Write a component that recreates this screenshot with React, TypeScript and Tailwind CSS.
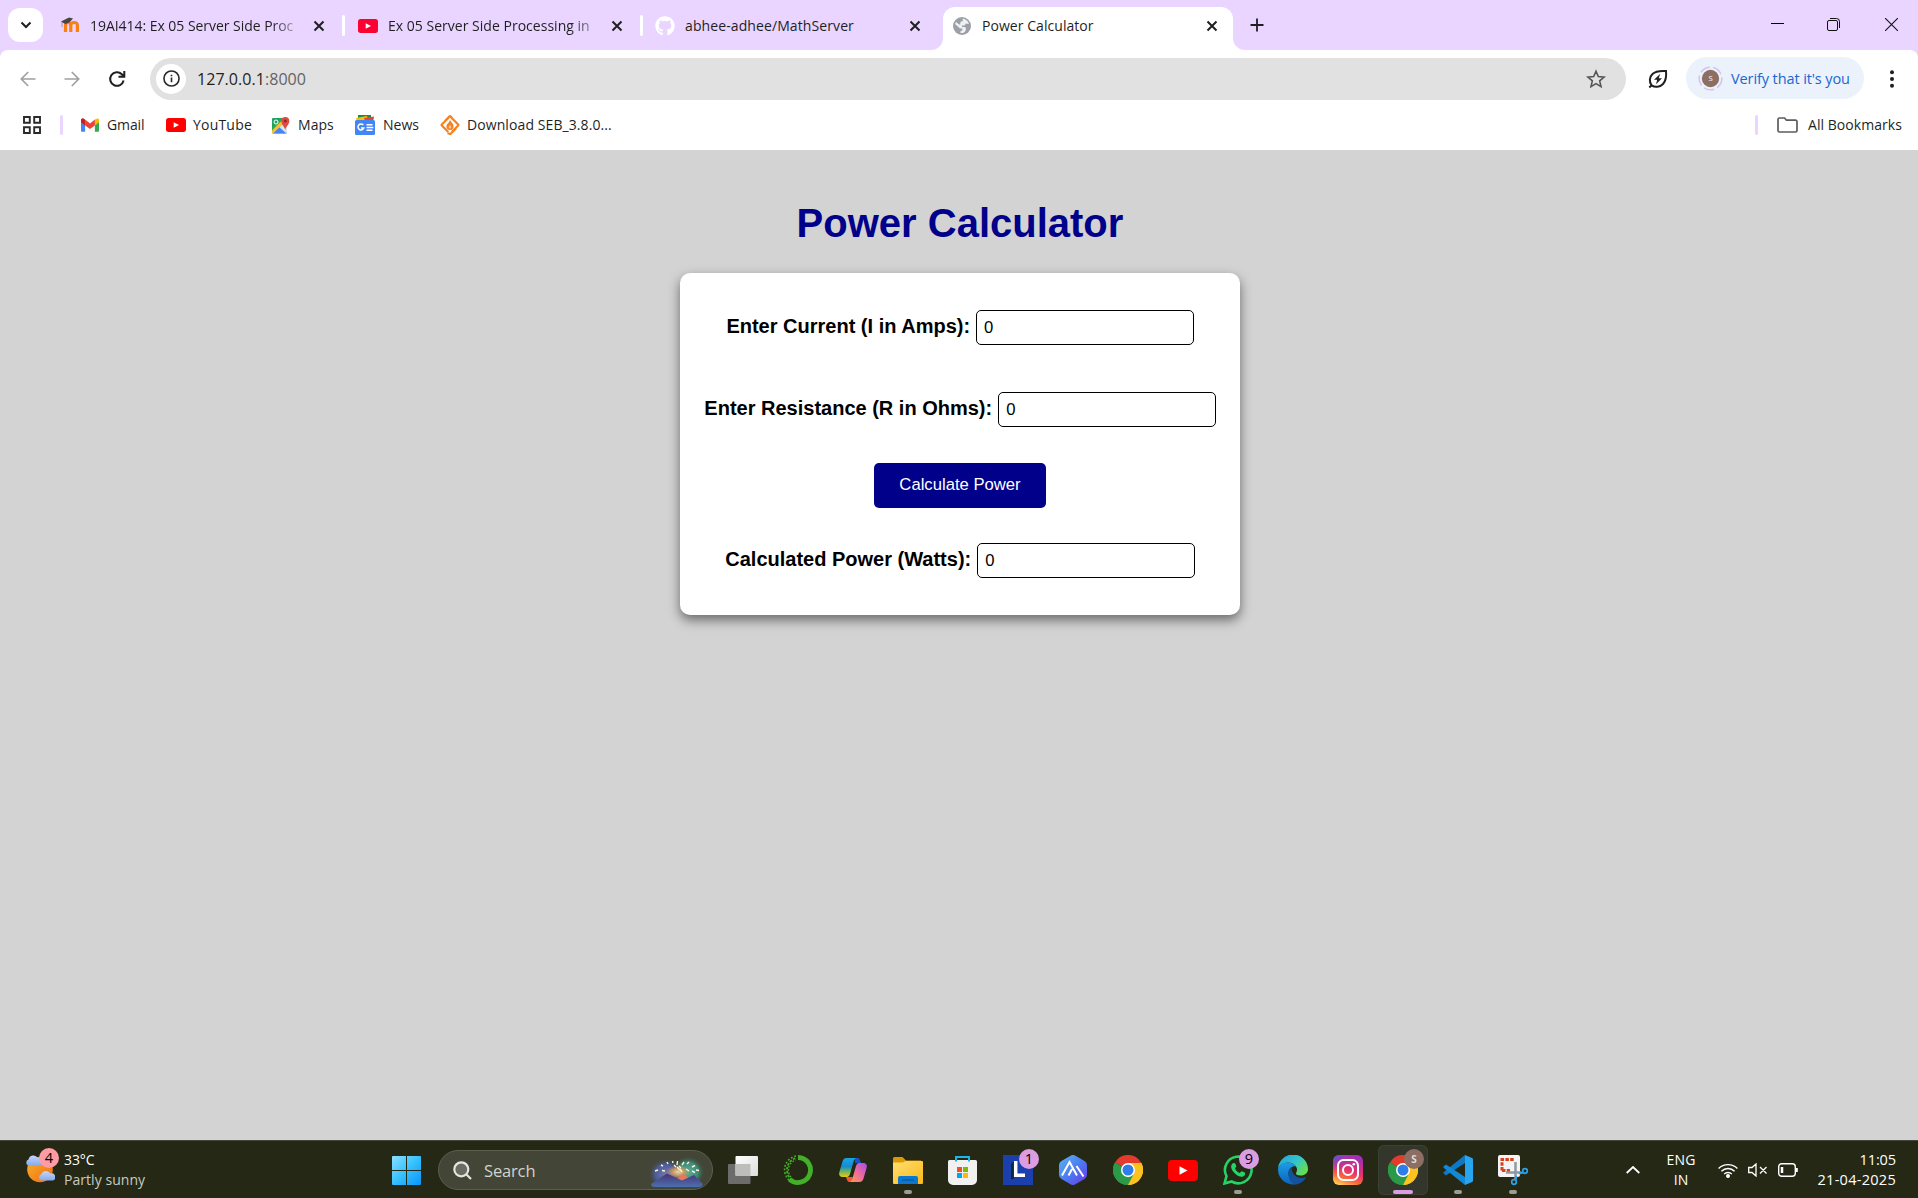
import React from "react";
import { FaGithub } from "react-icons/fa";

type Kids = { children?: React.ReactNode; className?: string };

const YouTube = ({ className = "", red = "#f00" }: { className?: string; red?: string }) => (
  <svg viewBox="0 0 30 21" className={className}>
    <rect width="30" height="21" rx="4" fill={red} />
    <path d="M11.5 6.2v8.6l8-4.3z" fill="#fff" />
  </svg>
);

const Cross = () => (
  <svg viewBox="0 0 12 12" className="h-3 w-3 shrink-0" stroke="#1f1f1f" strokeWidth="2">
    <path d="M1.5 1.5l9 9M10.5 1.5l-9 9" />
  </svg>
);

const Moodle = () => (
  <svg viewBox="0 0 20 17" className="h-[17px] w-5 shrink-0">
    <path d="M5.5 15V8.5c0-2 1-3 2.600-3s2.700 1 2.700 3V15M10.800 15V8.500c0-2 1.200-3 3.200-3s3.400 1 3.400 3V15" fill="none" stroke="#f98012" strokeWidth="3.2" />
    <path d="M1 4.500L9 .5l4 1-3.500 3.800-4 1.700-3-1.500z" fill="#4a4347" />
    <path d="M2 5v5" stroke="#8b7c83" strokeWidth=".7" />
  </svg>
);

const Globe = () => (
  <svg viewBox="0 0 18 18" className="h-[18px] w-[18px] shrink-0">
    <circle cx="9" cy="9" r="9" fill="#9aa0a6" />
    <path d="M9 1.800c3.500 0 6.200 2 7 5h-3.500c0 1-.7 1.700-1.700 1.700H9v1.600h2.500c.8 0 1.400.6 1.400 1.400 0 2.500-1.200 4.500-4.400 4.500l-1.200-.3v-1.500c1 0 2-.8 2-1.800v-1H7L2 7c.2-.8.6-1.500 1-2l3.300 2.600h1V6c0-1 .7-1.700 1.700-1.700h.8V2.500z" fill="#eef0f2" />
  </svg>
);

const ChromeLogo = ({ className = "" }: { className?: string }) => (
  <svg viewBox="0 0 30 30" className={className}>
    <path d="M15 15L2 7.500A15 15 0 0 1 28 7.500z" fill="#e33b2e" />
    <path d="M15 15L28 7.500A15 15 0 0 1 15 30z" fill="#fcc31e" />
    <path d="M15 15v15A15 15 0 0 1 2 7.500z" fill="#2a9a48" />
    <path d="M15 8H28.300a15 15 0 0 0-.3-.5H15z" fill="#e33b2e" />
    <path d="M15 8h13.300A15 15 0 0 1 15 30l6-11.500z" fill="#fcc31e" />
    <path d="M2 7.500l6.900 11L15 22l5.500-2.500L15 30A15 15 0 0 1 2 7.500z" fill="#2a9a48" />
    <circle cx="15" cy="15" r="7" fill="#fff" />
    <circle cx="15" cy="15" r="5.500" fill="#2f7de9" />
  </svg>
);

const Tab = ({ icon, children, className = "" }: Kids & { icon: React.ReactNode }) => (
  <div className="flex h-[50px] w-[298px] shrink-0 items-center pt-px">
    <div className="flex w-5 shrink-0 justify-center">{icon}</div>
    <div className={`ml-2.5 w-[214px] shrink-0 whitespace-nowrap text-[14px] ${className}`}>{children}</div>
    <div className="ml-[9px] flex w-3 shrink-0">
      <Cross />
    </div>
    <div className="ml-[17px] h-[21px] w-[3px] rounded-full bg-white" />
  </div>
);

const TabStrip = () => (
  <div className="flex h-[50px] bg-[#e9d5ff]">
    <div className="ml-2 mt-2 flex h-[34px] w-[35px] shrink-0 items-center justify-center rounded-xl bg-white">
      <svg viewBox="0 0 12 8" className="h-2 w-3" fill="none" stroke="#1f1f1f" strokeWidth="2">
        <path d="M1.500 1.500L6 6l4.500-4.500" />
      </svg>
    </div>
    <div className="flex pl-[17px]">
      <Tab icon={<Moodle />} className="tracking-[-0.04px] [mask-image:linear-gradient(to_right,#000_182px,transparent_214px)]">19AI414: Ex 05 Server Side Proc</Tab>
      <Tab icon={<YouTube className="h-[14px] w-5" red="#ff0033" />} className="tracking-[0.02px] [mask-image:linear-gradient(to_right,#000_182px,transparent_220px)]">Ex 05 Server Side Processing in</Tab>
      <div className="flex h-[50px] w-[287px] shrink-0 items-center pt-px">
        <FaGithub className="ml-[-1px] h-5 w-5 shrink-0 text-white" />
        <div className="ml-2.5 w-[224px] whitespace-nowrap text-[14px] tracking-[0.1px]">abhee-adhee/MathServer</div>
        <Cross />
      </div>
    </div>
    <div className="relative mt-[7px] flex h-[43px] w-[290px] shrink-0 items-center rounded-t-xl bg-white pb-[6px]">
      <svg viewBox="0 0 314 12" className="absolute -left-3 bottom-0 h-3 w-[314px]" fill="#fff">
        <path d="M0 12a12 12 0 0 0 12-12v12zM314 12a12 12 0 0 1-12-12v12z" />
      </svg>
      <div className="ml-[10px] flex"><Globe /></div>
      <div className="ml-[11px] w-[224px] whitespace-nowrap text-[14px] tracking-[0.05px]">Power Calculator</div>
      <Cross />
    </div>
    <svg viewBox="0 0 14 14" className="ml-[17px] mt-[18px] h-[14px] w-[14px]" stroke="#1f1f1f" strokeWidth="1.800">
      <path d="M7 .5v13M.5 7h13" />
    </svg>
    <div className="mr-5 ml-auto flex h-[50px] items-start gap-[44px] pt-[18px]">
      <svg viewBox="0 0 13 13" className="h-[13px] w-[13px]" stroke="#000"><path d="M0 5.500h13" /></svg>
      <svg viewBox="0 0 13 13" className="-ml-px mr-px h-[13px] w-[13px]" stroke="#111" fill="none">
        <rect x=".5" y="2.500" width="10" height="10" rx="1.500" />
        <path d="M3 .5h6.500a3 3 0 0 1 3 3V10" />
      </svg>
      <svg viewBox="0 0 13 13" className="h-[13px] w-[13px]" stroke="#111" strokeWidth="1.100"><path d="M0 0l13 13M13 0L0 13" /></svg>
    </div>
  </div>
);

const Arrow = ({ className = "" }: Kids) => (
  <svg viewBox="0 0 16 16" className={`h-4 w-4 ${className}`} fill="none" stroke="#a0a0a0" strokeWidth="1.700">
    <path d="M15.500 8H1.500M8.200 1L1.300 8l6.900 7" />
  </svg>
);

const Toolbar = () => (
  <div className="bg-[#e9d5ff]">
    <div className="flex h-[57px] items-center rounded-t-lg bg-white">
      <Arrow className="ml-[20px]" />
      <Arrow className="ml-[28px] rotate-180" />
      <svg viewBox="0 0 18 18" className="ml-[28px] h-[18px] w-[18px]" fill="none" stroke="#1f1f1f" strokeWidth="2">
        <path d="M15.600 10.500A6.800 6.800 0 1 1 13.800 4.200L16 6.500M16.300 1v5.800h-5.800" />
      </svg>
      <div className="ml-[24px] flex h-[42px] w-[1476px] items-center rounded-full bg-[#e1e1e1]">
        <div className="ml-[6px] flex h-[30px] w-[30px] items-center justify-center rounded-full bg-white">
          <svg viewBox="0 0 18 18" className="h-[17px] w-[17px]" fill="none" stroke="#2a2a2a" strokeWidth="1.700">
            <circle cx="9" cy="9" r="8" />
            <path d="M9 8v5M9 5v1.700" />
          </svg>
        </div>
        <div className="ml-[11px] pt-px text-[16px] tracking-[0.05px] text-[#1f1f1f]">127.0.0.1<span className="text-[#636363]">:8000</span></div>
        <svg viewBox="0 0 20 20" className="ml-auto mr-5 h-5 w-5" fill="none" stroke="#555" strokeWidth="1.600">
          <path d="M10 2.200l2.300 5.400 5.800.5-4.400 3.800 1.300 5.700-5-3-5 3 1.300-5.700L1.900 8.100l5.800-.5z" />
        </svg>
      </div>
      <svg viewBox="0 0 20 20" className="ml-[22px] h-5 w-5" fill="none" stroke="#1f1f1f" strokeWidth="2">
        <path d="M3.600 16.300C1 13 1.300 8 4.500 5 7.500 2 12 1.600 18 2c.6 6-.2 10-3 13-3 3.200-8 3.600-11.400 1.300zM1.300 18.500l2.300-2.200" />
        <path d="M12.300 4.800L6 10.700h3.200L8 15.200l6-6h-3.300z" fill="#1f1f1f" stroke="none" />
      </svg>
      <div className="ml-[18px] mt-[-1px] flex h-[42px] w-[178px] items-center rounded-full bg-[#ebf2fb]">
        <svg viewBox="0 0 26 26" className="ml-3 h-[25px] w-[25px]">
          <circle cx="13" cy="13" r="11.800" fill="none" stroke="#d5c3ee" strokeWidth="1.600" strokeDasharray="11 3.500" />
          <circle cx="13" cy="13" r="9" fill="#8d6e63" />
          <text x="13" y="16" textAnchor="middle" fontSize="8" fill="#fff">S</text>
        </svg>
        <div className="ml-2 whitespace-nowrap pt-0.5 text-[14.500px] tracking-[-0.1px] text-[#1967d2]">Verify that it's you</div>
      </div>
      <svg viewBox="0 0 4 18" className="ml-[26px] h-[18px] w-1" fill="#1f1f1f">
        <circle cx="2" cy="2.200" r="2" /><circle cx="2" cy="9" r="2" /><circle cx="2" cy="15.800" r="2" />
      </svg>
    </div>
    <div className="flex h-[43px] items-center bg-white pb-[8px] text-[14px] text-[#1f1f1f] [&_span]:-mt-px">
      <svg viewBox="0 0 18 18" className="ml-[23px] h-[18px] w-[18px]" fill="none" stroke="#2a2a2a" strokeWidth="1.900">
        <path d="M1 1h5.800v5.800H1zM11.200 1H17v5.800h-5.800zM1 11.200h5.800V17H1zM11.200 11.200H17V17h-5.800z" />
      </svg>
      <div className="ml-[19px] h-5 w-[3px] rounded-full bg-[#e9d5ff]" />
      <div className="ml-[18px] flex w-[85px] items-center gap-2">
        <svg viewBox="0 0 20 15" className="h-[14px] w-[18px]">
          <path d="M0 2v12a1 1 0 0 0 1 1h3.600V6z" fill="#4285f4" />
          <path d="M20 2v12a1 1 0 0 1-1 1h-3.600V6z" fill="#34a853" />
          <path d="M15.400 1.500L18 .2a1.700 1.700 0 0 1 2 1.800v2.400l-4.600 3.600z" fill="#fbbc04" />
          <path d="M4.600 8V1.500L10 5.700l5.400-4.200V8L10 12z" fill="#ea4335" />
          <path d="M0 4.400V2A1.900 1.900 0 0 1 3 .4l1.600 1.200V8z" fill="#c5221f" />
        </svg>
        <span className="tracking-[-0.1px]">Gmail</span>
      </div>
      <div className="flex w-[105px] items-center gap-[7px]">
        <YouTube className="h-[14px] w-5" />
        <span className="tracking-[0.2px]">YouTube</span>
      </div>
      <div className="flex w-[84px] items-center gap-2">
        <svg viewBox="0 0 19 18" className="h-[18px] w-[19px]">
          <rect x="1" y="2" width="15" height="15.500" rx="1.500" fill="#34a853" />
          <path d="M1.500 17.500L16 4v12a1.500 1.500 0 0 1-1.500 1.500z" fill="#dce3e9" />
          <path d="M8 11l7.500 6.500H2z" fill="#4285f4" />
          <path d="M1 14.500L13 2.500l3 1.500L2 17.500a1 1 0 0 1-1-1z" fill="#fbc02d" />
          <path d="M1 12V3.500A1.500 1.500 0 0 1 2.500 2H11z" fill="#1ea362" />
          <circle cx="5" cy="6" r="2" fill="none" stroke="#fff" />
          <path d="M14.200 14c-.3-3.500-3.900-5-3.900-9a4 4 0 0 1 8 0c0 4-3.800 5.500-4.100 9z" fill="#e04a3f" />
          <circle cx="14.300" cy="5" r="1.400" fill="#812b2b" />
        </svg>
        <span className="tracking-[0.05px]">Maps</span>
      </div>
      <div className="flex w-[85px] items-center gap-2">
        <svg viewBox="0 0 20 20" className="h-5 w-5">
          <path d="M3 0h13v8H3z" fill="#1e8e3e" />
          <path d="M1 3l11-2 2 7H2z" fill="#fbbc04" />
          <path d="M9 3l10-1.500L18 8h-7z" fill="#ea4335" />
          <rect y="5" width="20" height="15" rx="1.500" fill="#4285f4" />
          <path d="M8.300 10A3 3 0 1 0 8.800 13H6M11.500 9.800h6M11.500 12.500h6.800M11.500 15.200h6" fill="none" stroke="#fff" strokeWidth="1.500" />
        </svg>
        <span>News</span>
      </div>
      <div className="flex items-center gap-[7px]">
        <svg viewBox="0 0 20 20" className="h-5 w-5" fill="none" stroke="#f58220" strokeWidth="2.200">
          <path d="M8.300 3L1.800 9.500a.7.700 0 0 0 0 1l6.500 6.500M7.500 18.300l1.800.4a1 1 0 0 0 1.400 0L16 13.500M11.700 17L18.200 10.500a.7.700 0 0 0 0-1L11.700 3M12.500 3.800L10.700 1.600a1 1 0 0 0-1.400 0L5 6" />
          <path d="M10 4.800c.6 2.200 3.600 3.700 3.600 6.500a3.600 3.600 0 0 1-7.200 0c0-2.100 2.800-3.300 3.600-6.500z" fill="#f58220" stroke="none" />
          <path d="M10 9.500c.3 1 1.300 1.500 1.300 2.700a1.300 1.300 0 0 1-2.600 0c0-1 1-1.500 1.300-2.700z" fill="#fbc795" stroke="none" />
        </svg>
        <span className="tracking-[0.09px]">Download SEB_3.8.0...</span>
      </div>
      <div className="ml-auto h-5 w-[3px] rounded-full bg-[#e9d5ff]" />
      <svg viewBox="0 0 21 16" className="ml-[19px] h-4 w-[21px]" fill="none" stroke="#5c5c5c" strokeWidth="1.700">
        <path d="M1 2.500A1.500 1.500 0 0 1 2.500 1h5l2 2.200h9A1.500 1.500 0 0 1 20 4.700v8.800a1.500 1.500 0 0 1-1.500 1.500h-16A1.500 1.500 0 0 1 1 13.500z" />
      </svg>
      <span className="ml-[10px] mr-4 w-[94px] whitespace-nowrap tracking-[0.05px]">All Bookmarks</span>
    </div>
  </div>
);

const Field = ({ label, className = "" }: { label: string; className?: string }) => (
  <div className={`flex h-[35px] justify-center ${className}`}>
    <label className="mr-[6px] mt-[5px] whitespace-nowrap text-[20px] font-bold leading-[23px]">{label}</label>
    <input defaultValue="0" className="h-[35px] w-[217.500px] rounded-[5px] border border-black bg-white px-[7px] text-[16.670px] outline-none" />
  </div>
);

const Calculator = () => (
  <main className="flex h-[990px] flex-col items-center bg-[#d3d3d3] pl-0.5 font-['Liberation_Sans',Arial,sans-serif] text-black">
    <h1 className="mt-[50px] text-[40px] font-bold leading-[46px] text-[#00008b]">Power Calculator</h1>
    <form className="mt-[27px] flex h-[342px] w-[560px] flex-col items-center rounded-[10px] bg-white pt-[37px] shadow-[0_5px_12px_rgba(0,0,0,0.5)]">
      <Field label="Enter Current (I in Amps):" />
      <Field label="Enter Resistance (R in Ohms):" className="mt-[47px]" />
      <button type="button" className="mt-[36px] h-[45px] w-[172px] rounded-[5px] bg-[#00008b] pb-[3px] text-[16.670px] text-white">Calculate Power</button>
      <Field label="Calculated Power (Watts):" className="mt-[35px]" />
    </form>
  </main>
);

const App = ({ children, dot = false, className = "" }: Kids & { dot?: boolean }) => (
  <div className={`relative flex h-[50px] w-[50px] shrink-0 items-center justify-center rounded-md ${className}`}>
    {children}
    {dot && <span className="absolute bottom-[1px] h-1 w-2 rounded-full bg-[#9b9c93]" />}
  </div>
);

const Badge = ({ children, className = "" }: Kids) => (
  <span className={`absolute flex h-5 w-5 items-center justify-center rounded-full text-[14.500px] leading-none text-black ${className}`}>{children}</span>
);

const icon = "h-[30px] w-[30px]";

const Taskbar = () => (
  <div className="flex h-[58px] items-center border-t border-[#43463a] bg-[#252815] pt-px text-[14px] text-white">
    <div className="relative ml-[25px] h-[30px] w-[39px]">
      <svg viewBox="0 0 30 30" className={icon}>
        <defs>
          <linearGradient id="sun" x1="0" y1="0" x2="1" y2="1"><stop stopColor="#f7b32b" /><stop offset="1" stopColor="#f06a14" /></linearGradient>
          <linearGradient id="cloud" x1="0" y1="0" x2="0" y2="1"><stop stopColor="#c4d8fb" /><stop offset="1" stopColor="#86a9ee" /></linearGradient>
        </defs>
        <circle cx="15" cy="14.500" r="12.800" fill="url(#sun)" />
        <path d="M3 10.500a3.300 3.300 0 0 1 .5-6A5 5 0 0 1 12.800 3a4 4 0 0 1 3.500 7.500z" fill="url(#cloud)" />
        <path d="M16 25.500a3.600 3.600 0 0 1 .3-6.500 5 5 0 0 1 9-.5 3.700 3.700 0 0 1 2.500 7z" fill="url(#cloud)" />
      </svg>
      <Badge className="-top-[7px] left-[14px] bg-[#ff9ba3]">4</Badge>
    </div>
    <div className="w-[328px] leading-5">
      <div className="tracking-[-0.1px]">33°C</div>
      <div className="tracking-[0.05px] text-[#c9cac2]">Partly sunny</div>
    </div>
    <svg viewBox="0 0 29 29" className="h-[29px] w-[29px]">
      <defs><linearGradient id="win" gradientUnits="userSpaceOnUse" x1="0" y1="0" x2="29" y2="29"><stop stopColor="#8be2ff" /><stop offset=".5" stopColor="#35c0ff" /><stop offset="1" stopColor="#0a94fb" /></linearGradient></defs>
      <path d="M0 1a1 1 0 0 1 1-1h13v14H0zM15 0h13a1 1 0 0 1 1 1v13H15zM0 15h14v14H1a1 1 0 0 1-1-1zM15 15h14v13a1 1 0 0 1-1 1H15z" fill="url(#win)" />
    </svg>
    <div className="ml-[17px] mr-[5px] flex h-10 w-[275px] items-center rounded-full border border-[#5c5f50] bg-[#434636]">
      <svg viewBox="0 0 19 19" className="ml-[14px] h-[19px] w-[19px]" fill="none" stroke="#e5e5e1" strokeWidth="2.200">
        <circle cx="8.300" cy="8.300" r="7" fill="#6a6c61" /><path d="M13.500 13.500l4.500 4.500" />
      </svg>
      <span className="ml-3 mt-0.5 text-[16.500px] tracking-[-0.15px] text-[#d2d3cc]">Search</span>
      <svg viewBox="0 0 54 32" className="ml-auto mr-[8px] mt-1 h-8 w-[54px]">
        <defs>
          <radialGradient id="glowL"><stop stopColor="#6d7ba8" /><stop offset=".6" stopColor="#4d5c9a" /><stop offset="1" stopColor="#434636" stopOpacity="0" /></radialGradient>
          <radialGradient id="glowR"><stop stopColor="#5cae94" /><stop offset=".6" stopColor="#3b8d7a" /><stop offset="1" stopColor="#434636" stopOpacity="0" /></radialGradient>
          <radialGradient id="warm"><stop stopColor="#f2d6a6" /><stop offset=".5" stopColor="#dfa05c" stopOpacity=".8" /><stop offset="1" stopColor="#d29058" stopOpacity="0" /></radialGradient>
          <linearGradient id="hill" x1="0" y1="0" x2="0" y2="1"><stop stopColor="#473476" /><stop offset="1" stopColor="#4c6fae" /></linearGradient>
        </defs>
        <ellipse cx="16" cy="18" rx="18" ry="16" fill="url(#glowL)" />
        <ellipse cx="38" cy="16" rx="17" ry="16" fill="url(#glowR)" />
        <ellipse cx="28" cy="16" rx="12" ry="7" fill="url(#warm)" />
        <path d="M27 23l6-5 6 4-6 5z" fill="#ee735c" />
        <path d="M8 14l-3 1M13 10l-2-1M18 8l-1-2M23 7l-.5-2M27 9l.5-4M32 9l2-3M37 8l2-2M42 11l3-1.500M46 14l3 .5M42 15l3 1.500M36 13l3 2M29 10l2 2M24 9l2 2M15 15l-3-.5M27 11l3 3M30 13l2 3" stroke="#fff3dd" strokeWidth="1.400" />
        <path d="M1 28L17 17.500l15 7L44 19l9 9q-1 3-4 3H5q-4 0-4-3z" fill="url(#hill)" />
      </svg>
    </div>
    <div className="flex gap-[5px]">
      <App>
        <svg viewBox="0 0 30 28" className="h-7 w-[30px]">
          <defs><linearGradient id="tv" x1="0" y1="0" x2="1" y2="1"><stop stopColor="#fff" /><stop offset="1" stopColor="#dcdcdc" /></linearGradient></defs>
          <rect x="0" y="8" width="22.500" height="20" rx="1" fill="#6c6c6a" />
          <rect x="7.500" y="0" width="22.500" height="20" rx="1" fill="url(#tv)" />
          <path d="M7.500 8h15v12h-14a1 1 0 0 1-1-1z" fill="#bdbdbb" />
        </svg>
      </App>
      <App>
        <svg viewBox="0 0 30 30" className={icon} fill="none" stroke="#43b02a">
          <path d="M15 2.500a12.500 12.500 0 1 1-8.500 21.700" strokeWidth="4.800" />
          <path d="M9 25A12.500 12.500 0 0 1 13 3" strokeWidth="1.800" strokeDasharray="2.500 1.500" />
          <path d="M6 25A14 14 0 0 1 13 1" strokeWidth="1.600" strokeDasharray="1.800 1.800" />
          <path d="M8 22A10.500 10.500 0 0 1 13 5" strokeWidth="1.400" strokeDasharray="1.500 1.900" />
        </svg>
      </App>
      <App>
        <svg viewBox="0 0 30 30" className={icon}>
          <defs>
            <linearGradient id="cpa" x1="0" y1="0" x2="0" y2="1"><stop stopColor="#17a6e8" /><stop offset=".45" stopColor="#178bd0" /><stop offset=".75" stopColor="#7dbb4c" /><stop offset="1" stopColor="#f0c419" /></linearGradient>
            <linearGradient id="cpb" x1="1" y1="0" x2="0" y2="1"><stop stopColor="#a24df0" /><stop offset=".5" stopColor="#ef6a9b" /><stop offset="1" stopColor="#fba04a" /></linearGradient>
          </defs>
          <path d="M17 3h2.500c2 0 2.500 2 3.500 5h-6z" fill="#1e4fc9" />
          <path d="M8 22h7l-1 5h-2.500C9.500 27 9 25 8 22z" fill="#f4572f" />
          <path d="M8.500 3H19c-2 0-3 2-3.600 4L12 19c-.8 2.500-2 3-4 3H5c-3 0-4.500-1.500-3.600-5L4.500 6.500C5.200 4 6.500 3 8.500 3z" fill="url(#cpa)" />
          <path d="M21.500 27H11c2 0 3-2 3.600-4L18 11c.8-2.500 2-3 4-3h3c3 0 4.500 1.500 3.600 5l-3.100 10.500c-.7 2.500-2 3.500-4 3.500z" fill="url(#cpb)" />
        </svg>
      </App>
      <App dot>
        <svg viewBox="0 0 30 27" className="mt-px h-[27px] w-[30px]">
          <defs><linearGradient id="fold" x1="0" y1="0" x2="1" y2="1"><stop stopColor="#ffdf72" /><stop offset="1" stopColor="#fbb818" /></linearGradient></defs>
          <path d="M0 1.500A1.500 1.500 0 0 1 1.500 0h8l3.500 3.500h15V8H0z" fill="#d99a06" />
          <path d="M0 5.500h10L12.500 4H29a1 1 0 0 1 1 1v21a1 1 0 0 1-1 1H1a1 1 0 0 1-1-1z" fill="url(#fold)" />
          <path d="M5 27v-6a2 2 0 0 1 2-2h16a2 2 0 0 1 2 2v6z" fill="#0b78cf" />
          <path d="M9 23h12" stroke="#064c8c" />
        </svg>
      </App>
      <App>
        <svg viewBox="0 0 29 29" className="-ml-px h-[29px] w-[29px]">
          <path d="M0 5.500A1.500 1.500 0 0 1 1.500 4h26A1.500 1.500 0 0 1 29 5.500V24a5 5 0 0 1-5 5H5a5 5 0 0 1-5-5z" fill="#f1f1f1" />
          <path d="M8 5.500V1h13v4.500" fill="none" stroke="#1fb5ea" strokeWidth="2" />
          <path d="M9 11h5v5H9z" fill="#f25022" /><path d="M15 11h5v5h-5z" fill="#7fba00" />
          <path d="M9 17h5v5H9z" fill="#00a4ef" /><path d="M15 17h5v5h-5z" fill="#ffb900" />
        </svg>
      </App>
      <App>
        <svg viewBox="0 0 30 30" className={icon}>
          <path d="M0 0h30v30H0z" fill="#1c3fae" />
          <path d="M11 6L8 9v15h3z" fill="#0d2b3c" />
          <path d="M12.700 6v14.300H22" fill="none" stroke="#fff" strokeWidth="3.500" />
        </svg>
        <Badge className="right-[4px] top-[4px] bg-[#db9ce2]">1</Badge>
      </App>
      <App>
        <svg viewBox="0 0 30 30" className={icon}>
          <defs><linearGradient id="hex" x1="0" y1="0" x2="1" y2="1"><stop stopColor="#5fb4f4" /><stop offset=".5" stopColor="#4b7df0" /><stop offset="1" stopColor="#6c35e8" /></linearGradient></defs>
          <path d="M12.500.7a5 5 0 0 1 5 0l9 5.200a5 5 0 0 1 2.500 4.300v9.600a5 5 0 0 1-2.500 4.300l-9 5.200a5 5 0 0 1-5 0l-9-5.200A5 5 0 0 1 1 19.800v-9.600a5 5 0 0 1 2.500-4.300z" fill="url(#hex)" />
          <path d="M4 20.500L11.500 7l7.500 13.500M10.500 20.500L14 14M18.500 11l7 10.500" fill="none" stroke="#fff" strokeWidth="2" />
        </svg>
      </App>
      <App><ChromeLogo className={icon} /></App>
      <App><YouTube className="h-[21px] w-[30px]" /></App>
      <App dot>
        <svg viewBox="0 0 30 30" className={icon}>
          <path d="M1.500 28.500l2-7.300A13.300 13.300 0 1 1 8.600 26.500z" fill="none" stroke="#25d366" strokeWidth="2.600" />
          <path d="M10.500 8c.8-.3 1.500 0 1.800.7l1 2.400c.2.600-.8 1.800-1.300 2.300 1 2 2.500 3.500 4.800 4.500.6-.6 1.500-1.900 2.200-1.700l2.700 1.400c.9.500.4 2.200-.2 3-2.500 2.600-6.500.7-9.300-1.800-2.600-2.500-5-6-3.700-8.800.4-1 1.200-1.700 2-2z" fill="#25d366" />
        </svg>
        <Badge className="right-[4px] top-[4px] bg-[#db9ce2]">9</Badge>
      </App>
      <App>
        <svg viewBox="0 0 30 30" className={icon}>
          <defs>
            <linearGradient id="edgeA" x1="0" y1="0" x2="1" y2=".6"><stop stopColor="#1f9fe0" /><stop offset=".6" stopColor="#35c4cd" /><stop offset="1" stopColor="#66dc52" /></linearGradient>
            <linearGradient id="edgeB" x1="0" y1="0" x2="0" y2="1"><stop stopColor="#1c9de6" /><stop offset="1" stopColor="#0b63bd" /></linearGradient>
          </defs>
          <path d="M0 15a15 15 0 0 1 30-1c0 4-3 6.500-7.500 6.500-3 0-4.500-1-4.500-2s1-1.500 1-4-3-7-9-7S0 12 0 15z" fill="url(#edgeA)" />
          <path d="M0 15c.3-4 4-7.500 9.500-7.500 3.500 0 7 1.500 8.500 4-4-1-7.500 2-7.500 7 0 5 4 10 10 10A15 15 0 0 1 0 15z" fill="url(#edgeB)" />
          <path d="M10.500 18.500c0-3 1.500-5.500 3.500-6.500-.5 3 0 5 2 7.500 3 3.500 8 4.500 12.300 2.300-2 4-6 7.700-11.300 7.800-4-1.500-6.500-6-6.500-11.100z" fill="#14529d" />
        </svg>
      </App>
      <App>
        <svg viewBox="0 0 30 30" className={icon}>
          <defs>
            <linearGradient id="iga" x1=".6" y1="0" x2=".2" y2="1"><stop stopColor="#a22fb8" /><stop offset=".45" stopColor="#e5306e" /><stop offset=".75" stopColor="#fb6a3a" /><stop offset="1" stopColor="#ffd257" /></linearGradient>
            <radialGradient id="igb" cx="0" cy="0" r=".6"><stop stopColor="#4460d6" /><stop offset="1" stopColor="#8a3ac8" stopOpacity="0" /></radialGradient>
          </defs>
          <rect width="30" height="30" rx="6" fill="url(#iga)" />
          <rect width="30" height="30" rx="6" fill="url(#igb)" />
          <rect x="5" y="5" width="20" height="20" rx="5.500" fill="none" stroke="#fff" strokeWidth="2" />
          <circle cx="15" cy="15" r="5" fill="none" stroke="#fff" strokeWidth="2" />
          <circle cx="20.800" cy="9.200" r="1.300" fill="#fff" />
        </svg>
      </App>
      <App className="bg-[#33362a] ring-1 ring-inset ring-[#3d4033]">
        <ChromeLogo className={icon} />
        <Badge className="right-[4px] top-[4px] bg-[#8d6e63]"><span className="text-[10px] font-bold text-[#ddd]">S</span></Badge>
        <span className="absolute bottom-[1px] h-1 w-5 rounded-full bg-[#db9ce2]" />
      </App>
      <App dot>
        <svg viewBox="0 0 30 30" className={icon}>
          <path d="M.3 18.200L3 20.500 22 8V0L.6 17.200z" fill="#0f78c4" />
          <path d="M.3 11.800L3 9.500 22 22v8L.6 12.800z" fill="#1389d6" />
          <path d="M22 0l7 3a1.700 1.700 0 0 1 1 1.500v21a1.700 1.700 0 0 1-1 1.500l-7 3z" fill="#27a5ee" />
        </svg>
      </App>
      <App dot>
        <svg viewBox="0 0 30 30" className={`${icon} overflow-visible`}>
          <rect width="22" height="22" rx="2" fill="#f4f4f4" />
          <path d="M4 15.500V4.500h12" fill="none" stroke="#d8401f" strokeWidth="3" strokeDasharray="3.500 1.300" />
          <path d="M4 15.500h8" fill="none" stroke="#d8401f" strokeWidth="3" strokeDasharray="3.500 1.300" />
          <path d="M17.500 7v17M8 17.500h15" stroke="#8d98a3" strokeWidth="2.500" />
          <circle cx="27" cy="16" r="2.300" fill="none" stroke="#2ba3e8" strokeWidth="1.700" />
          <circle cx="16" cy="27" r="2.300" fill="none" stroke="#2ba3e8" strokeWidth="1.700" />
          <path d="M21 18.500l4-1M18.500 21l-1 4" stroke="#2ba3e8" strokeWidth="2" />
        </svg>
      </App>
    </div>
    <svg viewBox="0 0 14 8" className="ml-[88px] h-2 w-[14px]" fill="none" stroke="#fff" strokeWidth="1.800"><path d="M.7 7L7 1l6.300 6" /></svg>
    <div className="ml-[26px] w-[30px] text-center leading-5"><div className="tracking-[0.2px]">ENG</div><div>IN</div></div>
    <svg viewBox="0 0 20 15" className="ml-[22px] h-[15px] w-5" fill="none" stroke="#fff" strokeWidth="1.400">
      <path d="M.6 5.500a13.300 13.300 0 0 1 18.800 0M3.400 8.300a9.300 9.300 0 0 1 13.200 0M6.200 11a5.400 5.400 0 0 1 7.600 0" />
      <circle cx="10" cy="13" r="1.300" fill="#fff" />
    </svg>
    <svg viewBox="0 0 20 14" className="ml-[10px] h-[14px] w-5" fill="none" stroke="#fff" strokeWidth="1.300">
      <path d="M.7 4.500H4L8 1v12L4 9.500H.7zM12 4l6.500 6.500M18.500 4L12 10.500" />
    </svg>
    <svg viewBox="0 0 20 14" className="ml-[10px] h-[14px] w-5" fill="none" stroke="#fff" strokeWidth="1.400">
      <rect x=".7" y=".7" width="16.600" height="12.600" rx="3" /><path d="M18.800 5v4" strokeWidth="2" /><path d="M4 4v6" strokeWidth="2.500" />
    </svg>
    <div className="ml-auto mr-[22px] text-right text-[14.500px] leading-5"><div className="tracking-[-0.1px]">11:05</div><div className="tracking-[0.28px]">21-04-2025</div></div>
  </div>
);

export default function Desktop() {
  return (
    <div className="h-[1198px] w-[1918px] overflow-hidden font-['Open_Sans','Noto_Sans',sans-serif] text-[#1f1f1f]">
      <TabStrip />
      <Toolbar />
      <Calculator />
      <Taskbar />
    </div>
  );
}
